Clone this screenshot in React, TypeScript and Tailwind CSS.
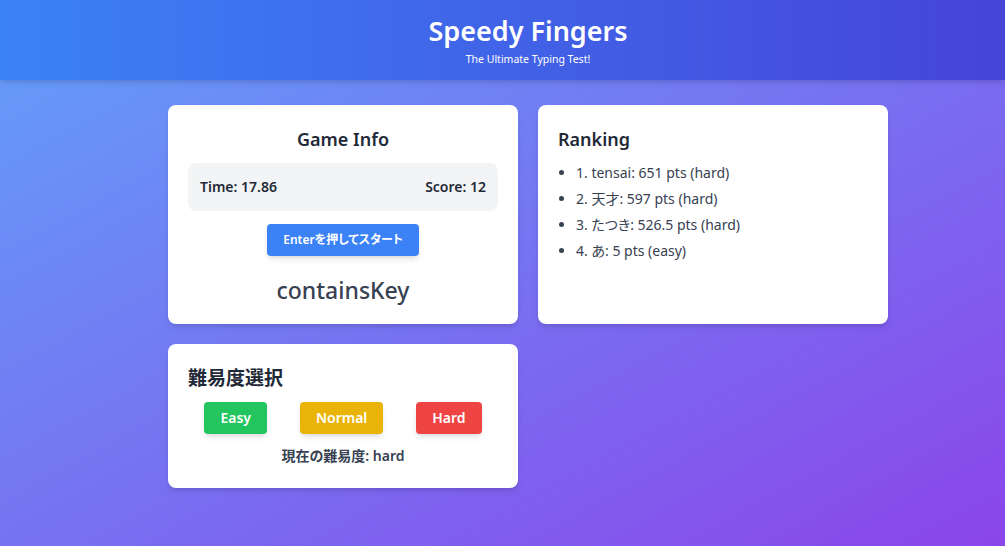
import React from "react";

const ranking = [
  "1. tensai: 651 pts (hard)",
  "2. 天才: 597 pts (hard)",
  "3. たつき: 526.5 pts (hard)",
  "4. あ: 5 pts (easy)",
];

const App = () => {
  return (
    <div
      className="min-h-[546px] w-full bg-linear-to-br/srgb from-[#62a0f9] to-[#8b45ea] [font-feature-settings:'palt']"
      style={{ fontFamily: '"Noto Sans", "Noto Sans CJK JP", sans-serif' }}
    >
      <header className="bg-linear-to-r/srgb from-[#3b82f6] to-[#4644d8] shadow-md h-[80px] pl-[51px] flex flex-col items-center justify-center">
        <h1 className="text-[27px] font-semibold text-white leading-[36px]">Speedy Fingers</h1>
        <p className="text-[10.5px] text-white leading-4 mt-0.5">The Ultimate Typing Test!</p>
      </header>

      <div className="pl-[51px]">
        <main className="mx-auto w-[720px] pt-[25px] grid grid-cols-2 gap-5">
          <section className="bg-white rounded-lg shadow-md p-5 flex flex-col items-center">
            <h2 className="text-[18px] font-semibold text-[#1f2937] leading-7">Game Info</h2>
            <div className="mt-[10px] w-full bg-[#f3f4f6] rounded-lg p-3 flex justify-between text-[14px] font-semibold text-[#1f2937] leading-6">
              <span>Time: 17.86</span>
              <span>Score: 12</span>
            </div>
            <button className="mt-[13px] bg-[#3b82f6] text-white text-xs font-semibold px-4 py-1.5 leading-5 rounded shadow-md">
              Enterを押してスタート
            </button>
            <p className="mt-5 text-[23px] font-medium text-[#374151] leading-7">containsKey</p>
          </section>

          <section className="bg-white rounded-lg shadow-md p-5">
            <h2 className="text-[18px] font-semibold text-[#1f2937] leading-7">Ranking</h2>
            <ul className="mt-[10px] list-disc pl-[18px] space-y-1.5 text-sm text-[#374151] leading-5">
              {ranking.map((r) => (
                <li key={r}>{r}</li>
              ))}
            </ul>
          </section>

          <section className="bg-white rounded-lg shadow-md p-5">
            <h2 className="text-[19px] font-semibold text-[#1f2937] leading-7">難易度選択</h2>
            <div className="mt-[10px] flex justify-around">
              <button className="bg-[#22c55e] text-white text-sm font-semibold px-4 py-1.5 leading-5 rounded shadow-md">
                Easy
              </button>
              <button className="bg-[#eab308] text-white text-sm font-semibold px-4 py-1.5 leading-5 rounded shadow-md">
                Normal
              </button>
              <button className="bg-[#ef4444] text-white text-sm font-semibold px-4 py-1.5 leading-5 rounded shadow-md">
                Hard
              </button>
            </div>
            <p className="mt-2.5 text-center text-[14px] font-semibold text-[#374151] leading-6">
              現在の難易度: hard
            </p>
          </section>
        </main>
      </div>
    </div>
  );
};

export default App;
